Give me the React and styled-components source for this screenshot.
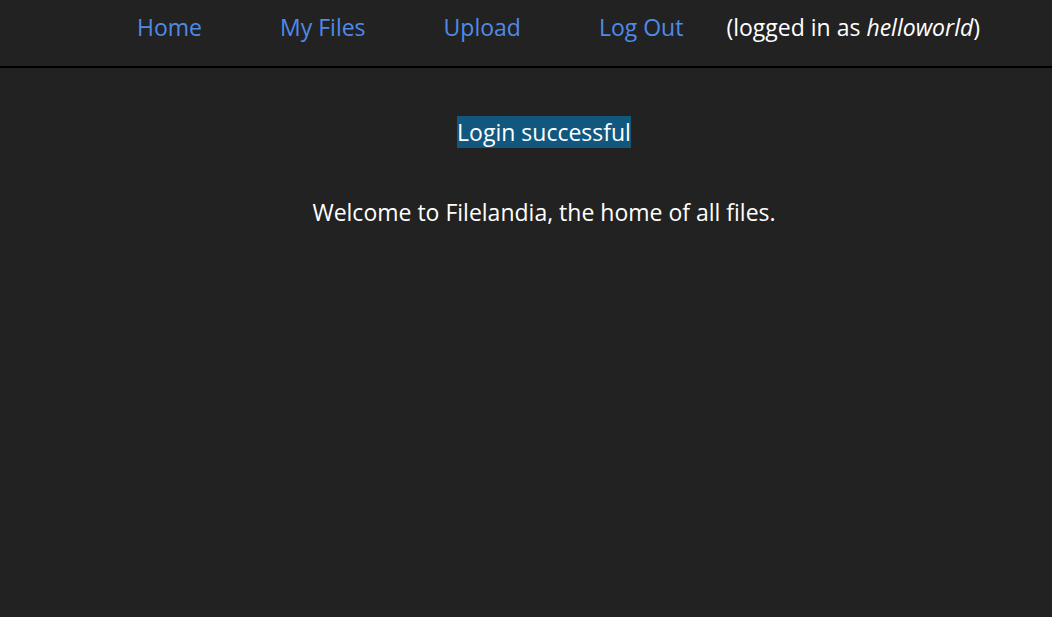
import React from 'react'
import styled, { createGlobalStyle } from 'styled-components'

const GlobalStyle = createGlobalStyle`
  html, body {
    margin: 0;
    padding: 0;
    background: #222222;
    color: #ffffff;
    font-family: "Open Sans", "Noto Sans", sans-serif;
  }
`

const Page = styled.div`
  min-height: 617px;
  background: #222222;
`

const NavBar = styled.nav`
  box-sizing: border-box;
  display: flex;
  align-items: center;
  height: 68px;
  padding: 0 0 13px 98px;
  border-bottom: 2px solid #000000;
  font-size: 23px;
`

const NavLink = styled.a`
  padding: 0 39px;
  color: #4f8ae8;
  text-decoration: none;
  cursor: pointer;
`

const UserNote = styled.span`
  margin-left: 4px;
  color: #ffffff;

  em {
    font-style: italic;
  }
`

const Main = styled.main`
  display: flex;
  flex-direction: column;
  align-items: center;
  padding: 48px 0 0 36px;
  font-size: 23px;
`

const Flash = styled.div`
  background: #12577e;
  line-height: 32px;
  height: 32px;
`

const Welcome = styled.p`
  margin: 48px 0 0;
  line-height: 32px;
`

const links = ['Home', 'My Files', 'Upload', 'Log Out']

const App = () => (
  <Page>
    <GlobalStyle />
    <NavBar>
      {links.map((label) => (
        <NavLink key={label}>{label}</NavLink>
      ))}
      <UserNote>
        (logged in as <em>helloworld</em>)
      </UserNote>
    </NavBar>
    <Main>
      <Flash>Login successful</Flash>
      <Welcome>Welcome to Filelandia, the home of all files.</Welcome>
    </Main>
  </Page>
)

export default App
